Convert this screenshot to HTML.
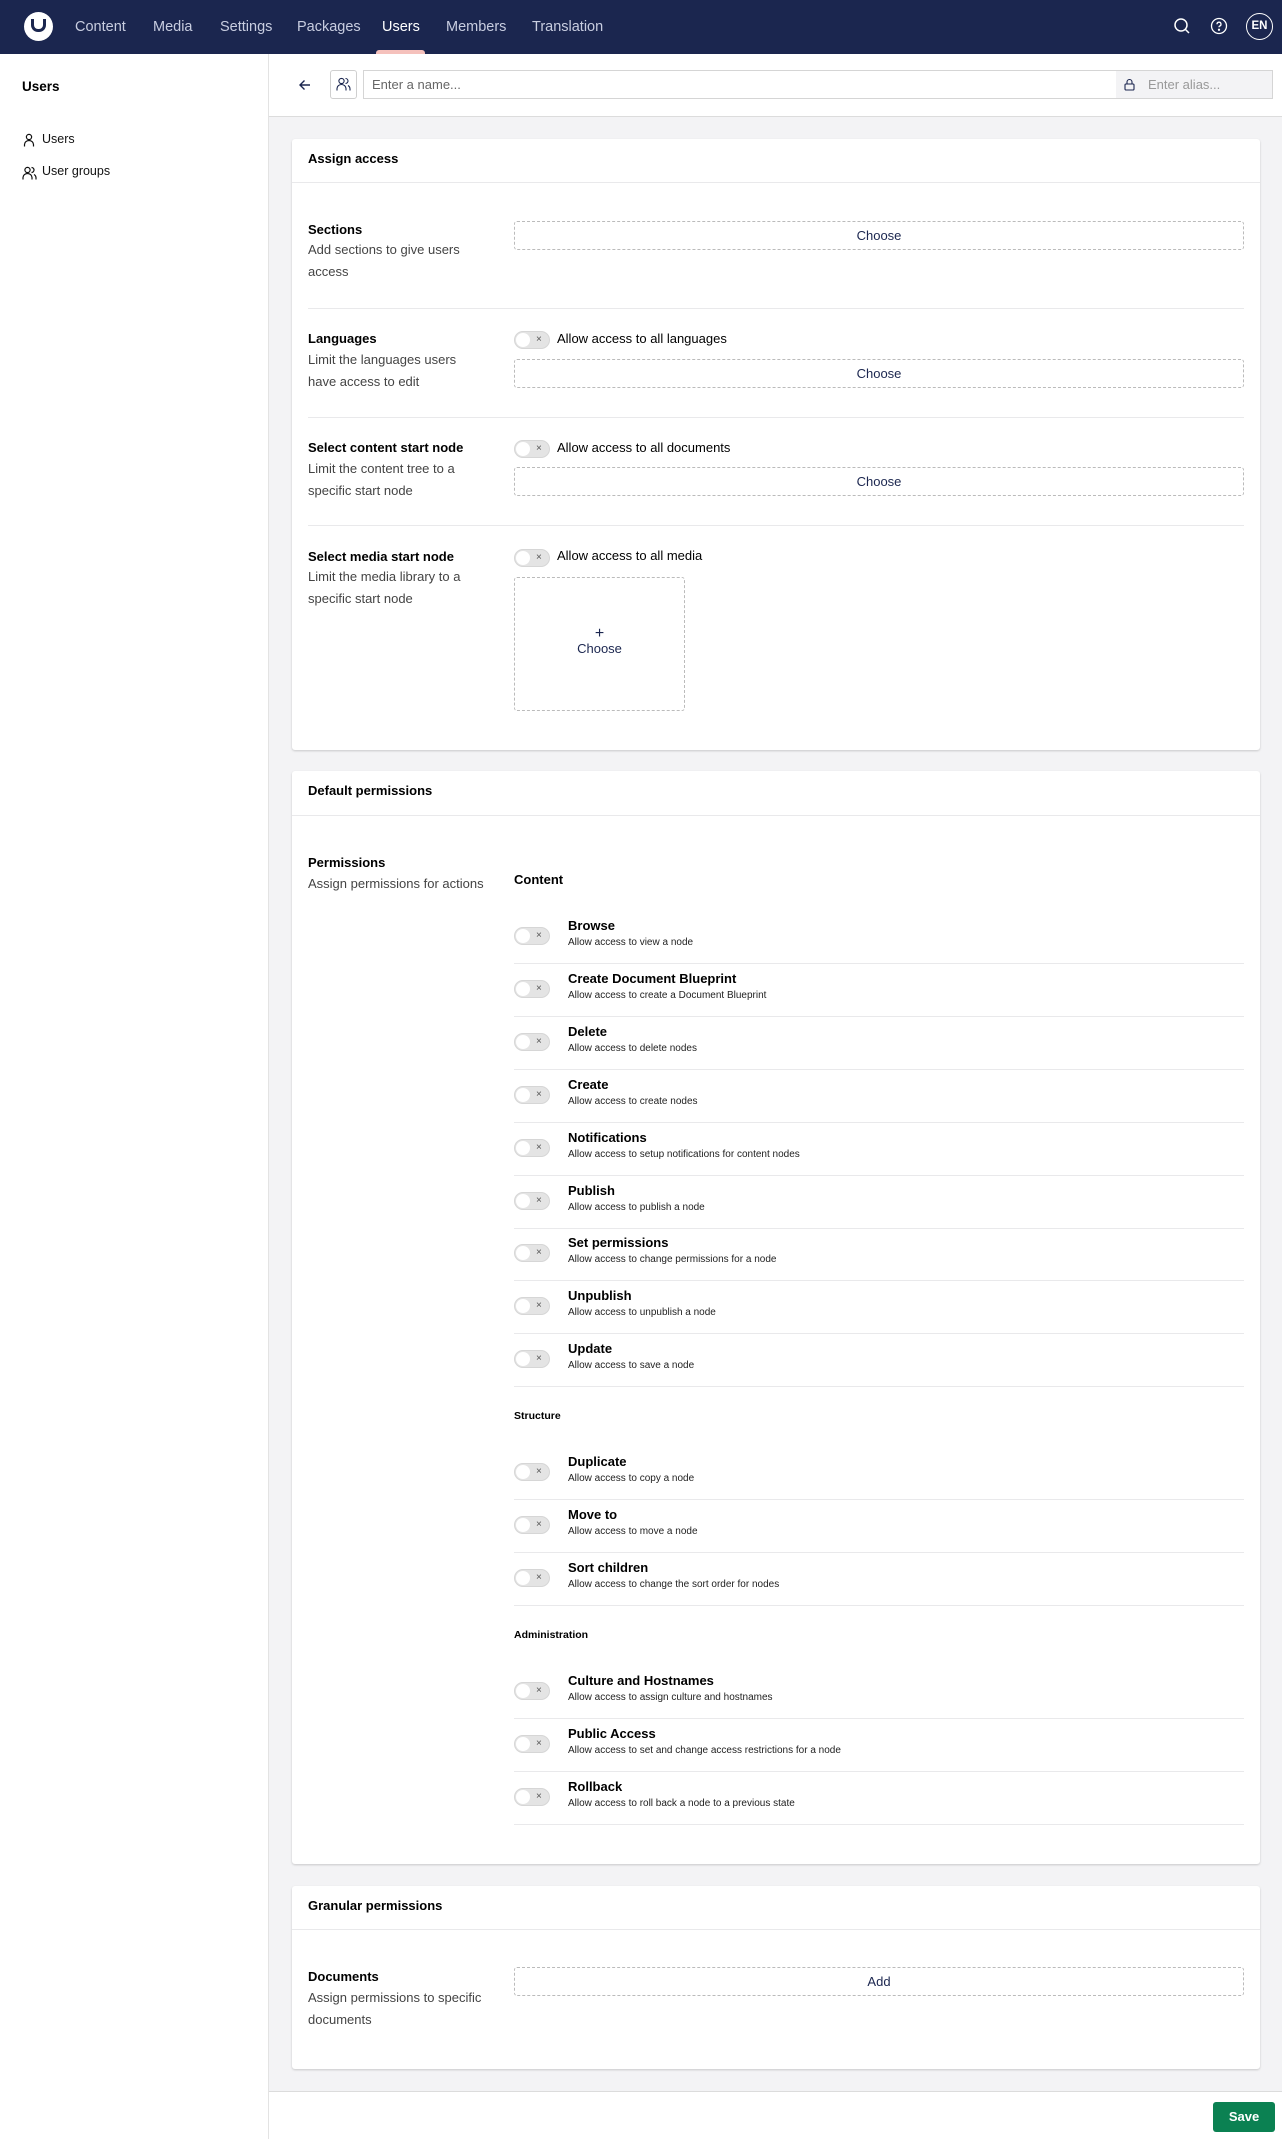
<!DOCTYPE html>
<html><head><meta charset="utf-8"><style>
*{box-sizing:border-box;margin:0;padding:0}
body{width:1282px;height:2139px;position:relative;font-family:"Liberation Sans",sans-serif;color:#1b264f;background:#f3f3f5;overflow:hidden}
.a{position:absolute;white-space:nowrap}
.top{left:0;top:0;width:1282px;height:54px;background:#1b264f}
.nav{top:19px;font-size:14.5px;color:#c8cde0}
.side{left:0;top:54px;width:269px;height:2085px;background:#fff;border-right:1px solid #e3e3e3}
.hdr{left:269px;top:54px;width:1013px;height:63px;background:#fff;border-bottom:1px solid #dcdcdc}
.card{background:#fff;border-radius:3px;box-shadow:0 1px 2px rgba(0,0,0,.18)}
.ch{font-size:13px;font-weight:bold;color:#000}
.line{height:1px;background:#e9e9eb}
.lt{font-size:13px;font-weight:bold;color:#000}
.ld{font-size:13px;color:#444;line-height:21.5px}
.btn{border:1px dashed #bbb;border-radius:3px;font-size:13px;text-align:center;color:#1b264f}
.tg{width:36px;height:18px;border-radius:9px;background:#e4e4e4;border:1px solid #d6d6d6}
.tg:before{content:"";position:absolute;left:1px;top:1px;width:14px;height:14px;border-radius:50%;background:#fff}
.tg:after{content:"×";position:absolute;left:21px;top:0px;font-size:10px;color:#555;line-height:16px}
.pt{font-size:13px;font-weight:bold;color:#000}
.pd{font-size:10px;color:#222}
.sh{font-size:10.5px;font-weight:bold;color:#000}
</style></head><body>
<div class="a top"></div>
<div class="a" style="left:24px;top:12px;width:29px;height:29px;border-radius:50%;background:#fff"></div>
<div class="a" style="left:31px;top:19px;width:15px;height:13px;border:3px solid #1b264f;border-top:none;border-radius:0 0 7px 7px"></div>
<div class="a nav" style="left:75px">Content</div>
<div class="a nav" style="left:153px">Media</div>
<div class="a nav" style="left:220px">Settings</div>
<div class="a nav" style="left:297px">Packages</div>
<div class="a nav" style="left:382px;color:#fff">Users</div>
<div class="a nav" style="left:446px">Members</div>
<div class="a nav" style="left:532px">Translation</div>
<div class="a" style="left:376px;top:50px;width:49px;height:4px;background:#f5c1bc;border-radius:3px 3px 0 0"></div>
<svg class="a" style="left:1173px;top:17px" width="18" height="18" viewBox="0 0 18 18" fill="none" stroke="#fff" stroke-width="1.5"><circle cx="8" cy="8" r="6"/><path d="M12.5 12.5L16 16"/></svg>
<svg class="a" style="left:1210px;top:17px" width="18" height="18" viewBox="0 0 18 18" fill="none" stroke="#fff" stroke-width="1.3"><circle cx="9" cy="9" r="7.5"/><path d="M7 7.2a2 2 0 1 1 2.6 1.9c-.5.2-.6.6-.6 1.2"/><circle cx="9" cy="12.8" r=".5" fill="#fff"/></svg>
<div class="a" style="left:1246px;top:13px;width:27px;height:27px;border-radius:50%;border:1.5px solid #fff;color:#fff;font-size:11.5px;font-weight:bold;text-align:center;line-height:24px">EN</div>

<div class="a side"></div>
<div class="a" style="left:22px;top:79px;font-size:13.5px;font-weight:bold;color:#000">Users</div>
<svg class="a" style="left:23px;top:133px" width="12" height="14" viewBox="0 0 12 14" fill="none" stroke="#111" stroke-width="1.2"><circle cx="6" cy="4" r="2.6"/><path d="M1.5 13.5v-2a4.5 4 0 0 1 9 0v2"/></svg>
<div class="a" style="left:42px;top:132px;font-size:12.5px;color:#111">Users</div>
<svg class="a" style="left:22px;top:166px" width="15" height="14" viewBox="0 0 15 14" fill="none" stroke="#111" stroke-width="1.2"><circle cx="5.5" cy="4" r="2.6"/><path d="M1 13.5v-2a4.5 4 0 0 1 9 0v2M9.5 1.5a2.5 2.5 0 0 1 0 5M12 8.5a4 4 0 0 1 2 3.5v1.5"/></svg>
<div class="a" style="left:42px;top:164px;font-size:12.5px;color:#111">User groups</div>

<div class="a hdr"></div>
<svg class="a" style="left:298px;top:78px" width="14" height="14" viewBox="0 0 14 14" fill="none" stroke="#1b264f" stroke-width="1.4"><path d="M12 7H2M6.5 2.5L2 7l4.5 4.5"/></svg>
<div class="a" style="left:330px;top:70px;width:27px;height:29px;border:1px solid #cfcfcf;border-radius:3px"></div>
<svg class="a" style="left:336px;top:77px" width="15" height="14" viewBox="0 0 15 14" fill="none" stroke="#1b264f" stroke-width="1.1"><circle cx="5.5" cy="4" r="2.6"/><path d="M1 13.5v-2a4.5 4 0 0 1 9 0v2M9.5 1.5a2.5 2.5 0 0 1 0 5M12 8.5a4 4 0 0 1 2 3.5v1.5"/></svg>
<div class="a" style="left:363px;top:70px;width:910px;height:29px;border:1px solid #d5d5d5;background:#fff"></div>
<div class="a" style="left:1116px;top:71px;width:156px;height:27px;background:#f3f3f5"></div>
<div class="a" style="left:372px;top:77px;font-size:13px;color:#666">Enter a name...</div>
<svg class="a" style="left:1124px;top:78px" width="11" height="13" viewBox="0 0 11 13" fill="none" stroke="#1b264f" stroke-width="1.1"><rect x="1" y="6" width="9" height="6" rx="1"/><path d="M3 6V4a2.5 2.5 0 0 1 5 0v2"/></svg>
<div class="a" style="left:1148px;top:77px;font-size:13px;color:#999">Enter alias...</div>

<!-- card 1 -->
<div class="a card" style="left:292px;top:139px;width:968px;height:611px"></div>
<div class="a ch" style="left:308px;top:151px">Assign access</div>
<div class="a line" style="left:292px;top:182px;width:968px"></div>
<div class="a lt" style="left:308px;top:222px">Sections</div>
<div class="a ld" style="left:308px;top:239px">Add sections to give users<br>access</div>
<div class="a btn" style="left:514px;top:221px;width:730px;height:29px;line-height:27px">Choose</div>
<div class="a line" style="left:308px;top:308px;width:936px"></div>
<div class="a lt" style="left:308px;top:331px">Languages</div>
<div class="a ld" style="left:308px;top:349px">Limit the languages users<br>have access to edit</div>
<div class="a tg" style="left:514px;top:331px"></div>
<div class="a" style="left:557px;top:331px;font-size:13px;color:#000">Allow access to all languages</div>
<div class="a btn" style="left:514px;top:359px;width:730px;height:29px;line-height:27px">Choose</div>
<div class="a line" style="left:308px;top:417px;width:936px"></div>
<div class="a lt" style="left:308px;top:440px">Select content start node</div>
<div class="a ld" style="left:308px;top:458px">Limit the content tree to a<br>specific start node</div>
<div class="a tg" style="left:514px;top:440px"></div>
<div class="a" style="left:557px;top:440px;font-size:13px;color:#000">Allow access to all documents</div>
<div class="a btn" style="left:514px;top:467px;width:730px;height:29px;line-height:27px">Choose</div>
<div class="a line" style="left:308px;top:525px;width:936px"></div>
<div class="a lt" style="left:308px;top:549px">Select media start node</div>
<div class="a ld" style="left:308px;top:566px">Limit the media library to a<br>specific start node</div>
<div class="a tg" style="left:514px;top:549px"></div>
<div class="a" style="left:557px;top:548px;font-size:13px;color:#000">Allow access to all media</div>
<div class="a btn" style="left:514px;top:577px;width:171px;height:134px;padding-top:48px;line-height:15px"><span style="font-size:16px">+</span><br>Choose</div>

<!-- card 2 -->
<div class="a card" style="left:292px;top:771px;width:968px;height:1093px"></div>
<div class="a ch" style="left:308px;top:783px">Default permissions</div>
<div class="a line" style="left:292px;top:815px;width:968px"></div>
<div class="a lt" style="left:308px;top:855px">Permissions</div>
<div class="a ld" style="left:308px;top:873px">Assign permissions for actions</div>
<div class="a lt" style="left:514px;top:872px">Content</div>

<div class="a tg" style="left:514px;top:927px"></div><div class="a pt" style="left:568px;top:918px">Browse</div><div class="a pd" style="left:568px;top:937px">Allow access to view a node</div><div class="a line" style="left:514px;top:963px;width:730px"></div>
<div class="a tg" style="left:514px;top:980px"></div><div class="a pt" style="left:568px;top:971px">Create Document Blueprint</div><div class="a pd" style="left:568px;top:990px">Allow access to create a Document Blueprint</div><div class="a line" style="left:514px;top:1016px;width:730px"></div>
<div class="a tg" style="left:514px;top:1033px"></div><div class="a pt" style="left:568px;top:1024px">Delete</div><div class="a pd" style="left:568px;top:1043px">Allow access to delete nodes</div><div class="a line" style="left:514px;top:1069px;width:730px"></div>
<div class="a tg" style="left:514px;top:1086px"></div><div class="a pt" style="left:568px;top:1077px">Create</div><div class="a pd" style="left:568px;top:1096px">Allow access to create nodes</div><div class="a line" style="left:514px;top:1122px;width:730px"></div>
<div class="a tg" style="left:514px;top:1139px"></div><div class="a pt" style="left:568px;top:1130px">Notifications</div><div class="a pd" style="left:568px;top:1149px">Allow access to setup notifications for content nodes</div><div class="a line" style="left:514px;top:1175px;width:730px"></div>
<div class="a tg" style="left:514px;top:1192px"></div><div class="a pt" style="left:568px;top:1183px">Publish</div><div class="a pd" style="left:568px;top:1202px">Allow access to publish a node</div><div class="a line" style="left:514px;top:1228px;width:730px"></div>
<div class="a tg" style="left:514px;top:1244px"></div><div class="a pt" style="left:568px;top:1235px">Set permissions</div><div class="a pd" style="left:568px;top:1254px">Allow access to change permissions for a node</div><div class="a line" style="left:514px;top:1280px;width:730px"></div>
<div class="a tg" style="left:514px;top:1297px"></div><div class="a pt" style="left:568px;top:1288px">Unpublish</div><div class="a pd" style="left:568px;top:1307px">Allow access to unpublish a node</div><div class="a line" style="left:514px;top:1333px;width:730px"></div>
<div class="a tg" style="left:514px;top:1350px"></div><div class="a pt" style="left:568px;top:1341px">Update</div><div class="a pd" style="left:568px;top:1360px">Allow access to save a node</div><div class="a line" style="left:514px;top:1386px;width:730px"></div>

<div class="a sh" style="left:514px;top:1410px">Structure</div>
<div class="a tg" style="left:514px;top:1463px"></div><div class="a pt" style="left:568px;top:1454px">Duplicate</div><div class="a pd" style="left:568px;top:1473px">Allow access to copy a node</div><div class="a line" style="left:514px;top:1499px;width:730px"></div>
<div class="a tg" style="left:514px;top:1516px"></div><div class="a pt" style="left:568px;top:1507px">Move to</div><div class="a pd" style="left:568px;top:1526px">Allow access to move a node</div><div class="a line" style="left:514px;top:1552px;width:730px"></div>
<div class="a tg" style="left:514px;top:1569px"></div><div class="a pt" style="left:568px;top:1560px">Sort children</div><div class="a pd" style="left:568px;top:1579px">Allow access to change the sort order for nodes</div><div class="a line" style="left:514px;top:1605px;width:730px"></div>

<div class="a sh" style="left:514px;top:1629px">Administration</div>
<div class="a tg" style="left:514px;top:1682px"></div><div class="a pt" style="left:568px;top:1673px">Culture and Hostnames</div><div class="a pd" style="left:568px;top:1692px">Allow access to assign culture and hostnames</div><div class="a line" style="left:514px;top:1718px;width:730px"></div>
<div class="a tg" style="left:514px;top:1735px"></div><div class="a pt" style="left:568px;top:1726px">Public Access</div><div class="a pd" style="left:568px;top:1745px">Allow access to set and change access restrictions for a node</div><div class="a line" style="left:514px;top:1771px;width:730px"></div>
<div class="a tg" style="left:514px;top:1788px"></div><div class="a pt" style="left:568px;top:1779px">Rollback</div><div class="a pd" style="left:568px;top:1798px">Allow access to roll back a node to a previous state</div><div class="a line" style="left:514px;top:1824px;width:730px"></div>

<!-- card 3 -->
<div class="a card" style="left:292px;top:1886px;width:968px;height:183px"></div>
<div class="a ch" style="left:308px;top:1898px">Granular permissions</div>
<div class="a line" style="left:292px;top:1929px;width:968px"></div>
<div class="a lt" style="left:308px;top:1969px">Documents</div>
<div class="a ld" style="left:308px;top:1987px">Assign permissions to specific<br>documents</div>
<div class="a btn" style="left:514px;top:1967px;width:730px;height:29px;line-height:27px">Add</div>

<div class="a" style="left:269px;top:2091px;width:1013px;height:48px;background:#fff;border-top:1px solid #dcdcdc"></div>
<div class="a" style="left:1213px;top:2102px;width:62px;height:30px;background:#0b8152;border-radius:3px;color:#fff;font-size:13px;font-weight:bold;text-align:center;line-height:30px">Save</div>
</body></html>
